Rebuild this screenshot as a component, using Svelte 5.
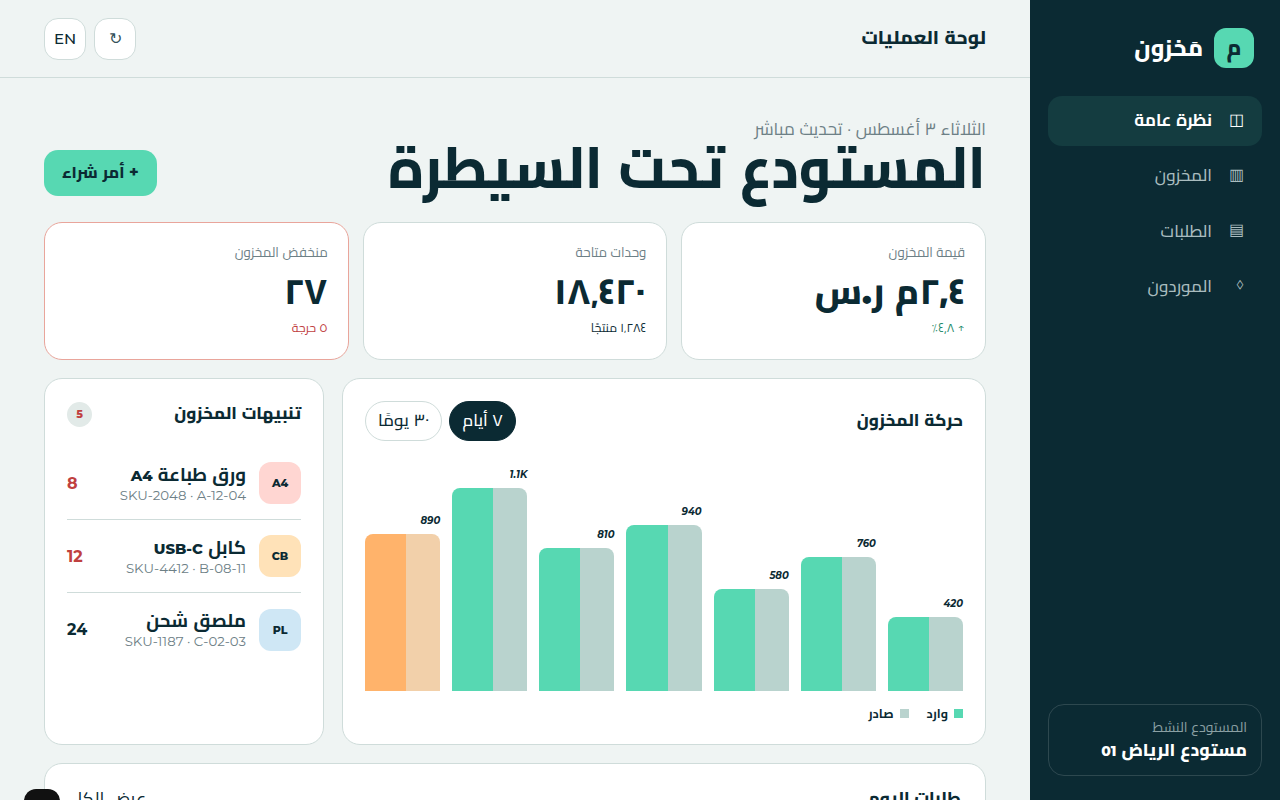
<script>
  const nav = [
    { icon: "◫", label: "نظرة عامة", active: true },
    { icon: "▥", label: "المخزون" },
    { icon: "▤", label: "الطلبات" },
    { icon: "◊", label: "الموردون" }
  ];
  const kpis = [
    { label: "قيمة المخزون", value: "٢٫٤م ر.س", note: "↑ ٤٫٨٪", kind: "up" },
    { label: "وحدات متاحة", value: "١٨٬٤٢٠", note: "١٬٢٨٤ منتجًا", kind: "" },
    { label: "منخفض المخزون", value: "٢٧", note: "٥ حرجة", kind: "down", alert: true }
  ];
  const bars = [
    { label: "420", h: 74 },
    { label: "760", h: 134 },
    { label: "580", h: 102 },
    { label: "940", h: 166 },
    { label: "810", h: 143 },
    { label: "1.1K", h: 203 },
    { label: "890", h: 157, warn: true }
  ];
  const alerts = [
    { code: "A4", tone: "red", name: "ورق طباعة", latin: "A4", sku: "SKU-2048 · A-12-04", qty: 8, low: true },
    { code: "CB", tone: "amber", name: "كابل", latin: "USB-C", sku: "SKU-4412 · B-08-11", qty: 12, low: true },
    { code: "PL", tone: "blue", name: "ملصق شحن", latin: "", sku: "SKU-1187 · C-02-03", qty: 24 }
  ];
</script>

<div class="shell" dir="rtl">
  <aside class="side">
    <div class="brand">
      <span class="mark">م</span>
      <span class="brandName">مَخزون</span>
    </div>
    <nav class="nav">
      {#each nav as item}
        <div class="navItem" class:active={item.active}>
          <span class="navIcon">{item.icon}</span>
          <span>{item.label}</span>
        </div>
      {/each}
    </nav>
    <div class="site">
      <div class="siteLabel">المستودع النشط</div>
      <div class="siteName">مستودع الرياض <span class="latin">01</span></div>
    </div>
  </aside>

  <main class="main">
    <header class="top">
      <div class="topTitle">لوحة العمليات</div>
      <div class="topBtns">
        <button class="iconBtn refresh">↻</button>
        <button class="iconBtn">EN</button>
      </div>
    </header>

    <div class="content">
      <section class="hero">
        <div>
          <div class="eyebrow">الثلاثاء ٣ أغسطس · تحديث مباشر</div>
          <h1>المستودع تحت السيطرة</h1>
        </div>
        <button class="cta">+ أمر شراء</button>
      </section>

      <section class="kpis">
        {#each kpis as k}
          <div class="card kpi" class:alert={k.alert}>
            <div class="kpiLabel">{k.label}</div>
            <div class="kpiValue">{k.value}</div>
            <div class="kpiNote {k.kind}">{k.note}</div>
          </div>
        {/each}
      </section>

      <section class="split">
        <div class="card chart">
          <div class="chartHead">
            <h2>حركة المخزون</h2>
            <div class="pills">
              <button class="pill on">٧ أيام</button>
              <button class="pill">٣٠ يومًا</button>
            </div>
          </div>
          <div class="bars">
            {#each bars as b}
              <div class="group">
                <span class="barVal">{b.label}</span>
                <div class="bar" class:warn={b.warn} style="height: {b.h}px">
                  <span class="out"></span>
                  <span class="in"></span>
                </div>
              </div>
            {/each}
          </div>
          <div class="legend">
            <span class="key"><i class="sw green"></i>وارد</span>
            <span class="key"><i class="sw grey"></i>صادر</span>
          </div>
        </div>

        <div class="card alerts">
          <div class="alertsHead">
            <h2>تنبيهات المخزون</h2>
            <span class="badge">5</span>
          </div>
          {#each alerts as a}
            <div class="alertRow">
              <span class="thumb {a.tone}">{a.code}</span>
              <div class="alertText">
                <div class="alertName">{a.name} <span class="latin">{a.latin}</span></div>
                <div class="alertSku" dir="ltr">{a.sku}</div>
              </div>
              <span class="qty" class:low={a.low}>{a.qty}</span>
            </div>
          {/each}
        </div>
      </section>

      <section class="card orders">
        <h2>طلبات اليوم</h2>
        <span class="viewAll">عرض الكل</span>
      </section>
    </div>
    <span class="fab"></span>
  </main>
</div>

<style>
  :global(body) {
    margin: 0;
    overflow: hidden;
    background: #eff4f3;
  }
  * {
    box-sizing: border-box;
  }
  .shell {
    display: flex;
    height: 800px;
    overflow: hidden;
    font-family: "Montserrat", "Cairo", sans-serif;
    color: #0b2a33;
  }
  h1, h2 {
    margin: 0;
  }
  button {
    font-family: inherit;
    color: inherit;
    cursor: pointer;
  }
  .latin {
    font-size: 0.8em;
    font-weight: 800;
    line-height: 1;
  }

  .side {
    width: 250px;
    flex: none;
    background: #0b2a33;
    padding: 28px 18px 24px;
    display: flex;
    flex-direction: column;
  }
  .brand {
    display: flex;
    align-items: center;
    gap: 11px;
    padding: 0 8px 0 0;
    height: 40px;
    margin-bottom: 28px;
  }
  .mark {
    width: 40px;
    height: 40px;
    border-radius: 12px;
    background: #57d8b2;
    display: grid;
    place-items: center;
    font-size: 22px;
    font-weight: 800;
    line-height: 40px;
  }
  .brandName {
    color: #fff;
    font-size: 23px;
    font-weight: 800;
    line-height: 40px;
  }
  .nav {
    display: flex;
    flex-direction: column;
    gap: 5.3px;
  }
  .navItem {
    height: 50px;
    border-radius: 14px;
    display: flex;
    align-items: center;
    gap: 12px;
    padding: 0 18px 2px;
    color: #a9bcbf;
    font-size: 17px;
    font-weight: 500;
  }
  .navItem.active {
    background: #143c40;
    color: #fff;
    font-weight: 700;
  }
  .navIcon {
    width: 20px;
    font-size: 16px;
    font-weight: 400;
    padding-bottom: 2px;
  }
  .site {
    margin-top: auto;
    height: 72px;
    border: 1px solid rgba(255, 255, 255, 0.14);
    border-radius: 16px;
    padding: 12px 14px;
  }
  .siteLabel {
    color: #8ba0a4;
    font-size: 14px;
    line-height: 20px;
  }
  .siteName {
    color: #fff;
    font-size: 17.5px;
    font-weight: 800;
    line-height: 25px;
  }

  .main {
    flex: 1;
    min-width: 0;
    position: relative;
  }
  .top {
    height: 78px;
    border-bottom: 1px solid #cfdcda;
    padding: 0 44px;
    display: flex;
    align-items: center;
    justify-content: space-between;
  }
  .topTitle {
    font-size: 19px;
    font-weight: 800;
    padding-bottom: 3px;
  }
  .topBtns {
    display: flex;
    gap: 8px;
  }
  .iconBtn {
    width: 42px;
    height: 42px;
    border-radius: 14px;
    border: 1px solid #cfdcda;
    background: #fff;
    font-size: 15px;
    font-weight: 500;
    padding: 0;
  }
  .refresh {
    font-size: 16px;
    font-weight: 400;
    color: #34505a;
  }
  .content {
    padding: 40px 44px 0;
  }
  .hero {
    display: flex;
    align-items: flex-end;
    justify-content: space-between;
    margin-bottom: 26px;
  }
  .eyebrow {
    font-size: 17.3px;
    color: #6d8086;
    line-height: 22px;
  }
  h1 {
    font-size: 58px;
    font-weight: 800;
    line-height: 56px;
    transform: scaleX(0.94);
    transform-origin: right center;
  }
  .cta {
    height: 46px;
    width: 113px;
    border: 0;
    border-radius: 14px;
    background: #57d8b2;
    font-size: 16px;
    font-weight: 800;
    padding: 0 0 3px;
  }
  .card {
    background: #fff;
    border: 1px solid #cfdcda;
    border-radius: 18px;
  }
  .kpis {
    display: grid;
    grid-template-columns: repeat(3, 1fr);
    gap: 14px;
    margin-bottom: 18px;
  }
  .kpi {
    height: 138px;
    padding: 18px 20px;
  }
  .kpi.alert {
    border-color: #e9a59b;
  }
  .kpiLabel {
    font-size: 13.3px;
    color: #6d8086;
    line-height: 22px;
  }
  .kpiValue {
    font-size: 36px;
    font-weight: 800;
    line-height: 52px;
    margin-top: 2px;
  }
  .kpiNote {
    font-size: 12.3px;
    line-height: 20px;
    margin-top: 1px;
  }
  .kpiNote.up {
    color: #1f8a6b;
  }
  .kpiNote.down {
    color: #c0403f;
  }

  .split {
    display: flex;
    gap: 18px;
    margin-bottom: 18px;
  }
  h2 {
    font-size: 17px;
    font-weight: 800;
  }
  .chart {
    flex: 1;
    height: 367px;
    padding: 22px 22px 0;
    display: flex;
    flex-direction: column;
  }
  .chartHead {
    display: flex;
    align-items: center;
    justify-content: space-between;
    height: 40px;
  }
  .chartHead h2 {
    padding-bottom: 3px;
  }
  .pills {
    display: flex;
    gap: 7px;
  }
  .pill {
    height: 40px;
    padding: 0 12px 2px;
    border-radius: 20px;
    border: 1px solid #cfdcda;
    background: #fff;
    font-size: 17px;
    font-weight: 500;
  }
  .pill.on {
    background: #0b2a33;
    border-color: #0b2a33;
    color: #fff;
  }
  .bars {
    height: 229px;
    margin-top: 21px;
    display: grid;
    grid-template-columns: repeat(7, 1fr);
    gap: 12px;
    align-items: end;
  }
  .group {
    display: flex;
    flex-direction: column;
  }
  .barVal {
    font-size: 10px;
    font-weight: 700;
    font-style: italic;
    line-height: 14px;
    margin-bottom: 6px;
  }
  .bar {
    display: flex;
    border-radius: 8px 8px 0 0;
    overflow: hidden;
  }
  .in {
    flex: 41;
    background: #57d8b2;
  }
  .out {
    flex: 34;
    background: #b9d3ce;
  }
  .bar.warn .in {
    background: #ffb36b;
  }
  .bar.warn .out {
    background: #f2d0aa;
  }
  .legend {
    display: flex;
    gap: 18px;
    margin-top: 11px;
    font-size: 12.5px;
    font-weight: 700;
  }
  .key {
    display: flex;
    align-items: center;
    gap: 6px;
  }
  .sw {
    width: 9px;
    height: 9px;
  }
  .sw.green {
    background: #57d8b2;
  }
  .sw.grey {
    background: #b9d3ce;
  }

  .alerts {
    width: 280px;
    flex: none;
    height: 367px;
    padding: 22px;
  }
  .alertsHead {
    display: flex;
    align-items: center;
    justify-content: space-between;
    height: 26px;
    margin-bottom: 20px;
  }
  .alertsHead h2 {
    padding-bottom: 3px;
  }
  .badge {
    width: 25px;
    height: 25px;
    border-radius: 50%;
    background: #e2eae8;
    color: #c0403f;
    font-size: 11px;
    font-weight: 800;
    display: grid;
    place-items: center;
  }
  .alertRow {
    display: flex;
    align-items: center;
    gap: 13px;
    padding: 15px 0;
    height: 73px;
    border-bottom: 1px solid #cfdcda;
  }
  .alertRow:last-child {
    border-bottom: 0;
  }
  .thumb {
    width: 42px;
    height: 42px;
    border-radius: 12px;
    display: grid;
    place-items: center;
    font-size: 11px;
    font-weight: 800;
    flex: none;
  }
  .thumb.red {
    background: #ffd6d2;
  }
  .thumb.amber {
    background: #ffe2b8;
  }
  .thumb.blue {
    background: #cfe7f5;
  }
  .alertText {
    flex: 1;
    min-width: 0;
  }
  .alertName {
    font-size: 18.5px;
    font-weight: 700;
    line-height: 23px;
  }
  .alertSku {
    font-size: 13.3px;
    color: #6d8086;
    line-height: 18px;
    text-align: right;
  }
  .qty {
    font-size: 16px;
    font-weight: 700;
    min-width: 20px;
    text-align: left;
  }
  .qty.low {
    color: #c0403f;
  }
  .orders {
    height: 120px;
    padding: 18px 24px;
    display: flex;
    justify-content: space-between;
  }
  .viewAll {
    font-size: 18px;
    margin-left: 1px;
    line-height: 26px;
    padding-top: 4px;
  }
  .fab {
    position: absolute;
    left: 24px;
    top: 789px;
    width: 36px;
    height: 36px;
    border-radius: 12px;
    background: #111;
  }
</style>
